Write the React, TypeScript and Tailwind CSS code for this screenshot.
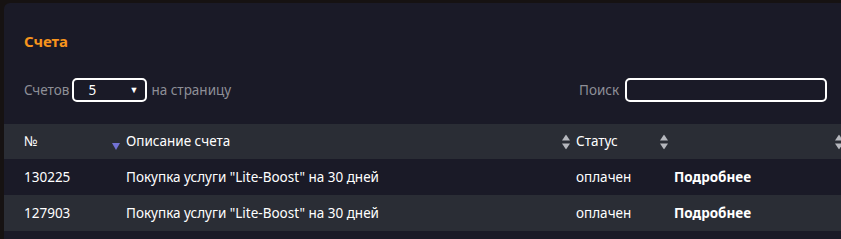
import React from 'react';

const rows = [
  { id: '130225', desc: 'Покупка услуги "Lite-Boost" на 30 дней', status: 'оплачен' },
  { id: '127903', desc: 'Покупка услуги "Lite-Boost" на 30 дней', status: 'оплачен' },
];

const SortBoth: React.FC = () => (
  <svg width="8" height="15" viewBox="0 0 8 15" className="absolute right-[2px] top-1/2 -translate-y-1/2">
    <path d="M4 0 L8 6 L0 6 Z" fill="#b5b7bd" />
    <path d="M0 9 L8 9 L4 15 Z" fill="#b5b7bd" />
  </svg>
);

const SortDesc: React.FC = () => (
  <svg width="8" height="7" viewBox="0 0 8 7" className="absolute right-[2px] top-[19px]">
    <path d="M0 0 L8 0 L4 7 Z" fill="#7272d4" />
  </svg>
);

export default function App() {
  return (
    <div
      className="w-[841px] h-[239px] overflow-hidden bg-[#161212] pl-[4px] pt-[3px]"
      style={{ fontFamily: '"Noto Sans", "Open Sans", sans-serif' }}
    >
      <div className="w-[860px] h-full bg-[#1a1a27] rounded-tl-[6px] pt-[28px]">
        {/* Title */}
        <h2 className="pl-[20px] text-[15px] leading-[20px] font-bold text-[#f7941d]">Счета</h2>

        {/* Controls */}
        <div className="mt-[27px] flex items-center h-[24px] pl-[20px] text-[13.5px] text-[#8e8f97]">
          <span>Счетов</span>
          <div className="ml-[3px] w-[75px] h-[24px] border-2 border-white rounded-[5px] flex items-center justify-between pl-[14px] pr-[7px] text-white">
            <span>5</span>
            <span className="text-[9px]">▼</span>
          </div>
          <span className="ml-[4px]">на страницу</span>
          <span className="ml-auto w-[46px]">Поиск</span>
          <div className="w-[202px] h-[24px] border-2 border-white rounded-[5px] mr-[37px]" />
        </div>

        {/* Table */}
        <div className="mt-[22px] text-[13.5px] text-white">
          <div className="flex h-[35px] bg-[#2a2d35] items-center">
            <div className="relative w-[118px] h-full flex items-center pl-[20px]">
              №<SortDesc />
            </div>
            <div className="relative w-[450px] h-full flex items-center pl-[4px]">
              Описание счета<SortBoth />
            </div>
            <div className="relative w-[98px] h-full flex items-center pl-[4px]">
              Статус<SortBoth />
            </div>
            <div className="relative w-[175px] h-full flex items-center">
              <SortBoth />
            </div>
          </div>
          {rows.map((r, i) => (
            <div
              key={r.id}
              className={`flex h-[36px] items-center ${i % 2 === 1 ? 'bg-[#2a2d35]' : 'bg-[#1a1a27]'}`}
            >
              <div className="w-[118px] pl-[20px]">{r.id}</div>
              <div className="w-[450px] pl-[4px]">{r.desc}</div>
              <div className="w-[98px] pl-[4px]">{r.status}</div>
              <div className="pl-[4px] font-bold">Подробнее</div>
            </div>
          ))}
        </div>
      </div>
    </div>
  );
}
